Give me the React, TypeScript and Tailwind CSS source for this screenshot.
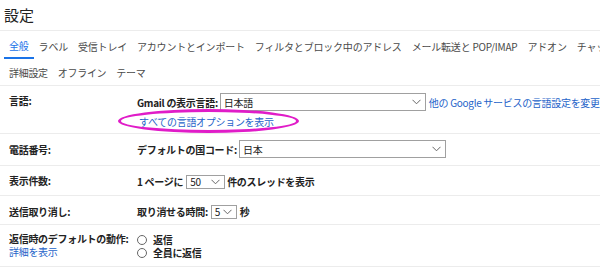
import React from 'react'

const font = { fontFamily: '"Noto Sans CJK JP", "Noto Sans", sans-serif' }

function Chevron() {
  return (
    <svg width="9" height="6" viewBox="0 0 9 6" className="shrink-0">
      <path d="M0.5 0.8 L4.5 4.8 L8.5 0.8" fill="none" stroke="#666" strokeWidth="1" />
    </svg>
  )
}

function Select({ value, className }: { value: string; className: string }) {
  return (
    <div
      className={`flex items-center justify-between border border-[#a0a0a0] bg-white pl-[3px] pr-[4px] text-[#222] ${className}`}
    >
      <span>{value}</span>
      <Chevron />
    </div>
  )
}

function Radio({ label }: { label: string }) {
  return (
    <div className="flex h-[13px] items-center gap-[6px] leading-[12px]">
      <span className="box-border h-[10px] w-[10px] rounded-full border border-[#666] bg-white" />
      <span className="font-bold text-[#222]">{label}</span>
    </div>
  )
}

const tabs = [
  'ラベル',
  '受信トレイ',
  'アカウントとインポート',
  'フィルタとブロック中のアドレス',
  'メール転送と POP/IMAP',
  'アドオン',
  'チャットと Meet',
]

export default function App() {
  return (
    <div
      className="h-[268px] w-[600px] overflow-hidden bg-white text-[10px] leading-[13px] tracking-[-0.3px] text-[#222]"
      style={font}
    >
      <div className="flex h-[31px] items-center border-b border-[#ececec] pl-[4px] pb-[1px]">
        <h1 className="text-[15px] leading-[18px] tracking-normal text-[#222]">設定</h1>
      </div>

      <div className="flex h-[28px] items-end overflow-hidden whitespace-nowrap pl-[4px] tracking-[-0.2px]">
        <div className="flex h-[26px] items-center border-b-2 border-[#1a73e8] px-[5px] text-[#1a73e8]">
          全般
        </div>
        {tabs.map((t) => (
          <div key={t} className="flex h-[26px] items-center px-[5px] text-[#4a4a4a]">
            {t}
          </div>
        ))}
      </div>

      <div className="flex h-[27px] items-center border-b border-[#ececec] pl-[4px] text-[#4a4a4a]">
        <span className="px-[5px]">詳細設定</span>
        <span className="px-[5px]">オフライン</span>
        <span className="px-[5px]">テーマ</span>
      </div>

      {/* 言語 */}
      <div className="relative flex h-[48px] border-b border-[#ececec] pl-[9px] pt-[7px]">
        <div className="w-[128px] pt-[1px] font-bold">言語:</div>
        <div className="flex flex-col">
          <div className="flex h-[18px] items-center whitespace-nowrap">
            <span className="font-bold">Gmail の表示言語:</span>
            <Select value="日本語" className="ml-[2px] h-[18px] w-[206px]" />
            <span className="ml-[3px] text-[#2563c9]">他の Google サービスの言語設定を変更</span>
          </div>
          <div className="mt-[4px] pl-[2px] text-[#2563c9]">すべての言語オプションを表示</div>
        </div>
        <div className="pointer-events-none absolute left-[118px] top-[23px] h-[24px] w-[181px] rounded-[50%] border-[3px] border-[#e01cc8]" />
      </div>

      {/* 電話番号 */}
      <div className="flex h-[32px] border-b border-[#ececec] pl-[9px] pt-[6px]">
        <div className="w-[128px] pt-[3px] font-bold">電話番号:</div>
        <div className="flex h-[18px] items-center">
          <span className="font-bold">デフォルトの国コード:</span>
          <Select value="日本" className="ml-[2px] h-[18px] w-[207px]" />
        </div>
      </div>

      {/* 表示件数 */}
      <div className="flex h-[30px] items-center border-b border-[#ececec] pl-[9px]">
        <div className="w-[128px] font-bold">表示件数:</div>
        <div className="flex items-center pt-[2px] font-bold">
          <span>1 ページに</span>
          <Select value="50" className="ml-[3px] h-[14px] w-[39px] font-normal" />
          <span className="ml-[2px]">件のスレッドを表示</span>
        </div>
      </div>

      {/* 送信取り消し */}
      <div className="flex h-[29px] items-center border-b border-[#ececec] pl-[9px]">
        <div className="w-[128px] pt-[2px] font-bold">送信取り消し:</div>
        <div className="flex items-center pt-[3px] font-bold">
          <span>取り消せる時間:</span>
          <Select value="5" className="ml-[3px] h-[14px] w-[26px] font-normal" />
          <span className="ml-[3px]">秒</span>
        </div>
      </div>

      {/* 返信時のデフォルトの動作 */}
      <div className="flex h-[42px] border-b border-[#ececec] pl-[9px] pt-[8px] leading-[12px]">
        <div className="flex w-[128px] flex-col gap-[1px]">
          <div className="font-bold">返信時のデフォルトの動作:</div>
          <div className="text-[#2563c9]">詳細を表示</div>
        </div>
        <div className="flex flex-col">
          <Radio label="返信" />
          <Radio label="全員に返信" />
        </div>
      </div>
    </div>
  )
}
